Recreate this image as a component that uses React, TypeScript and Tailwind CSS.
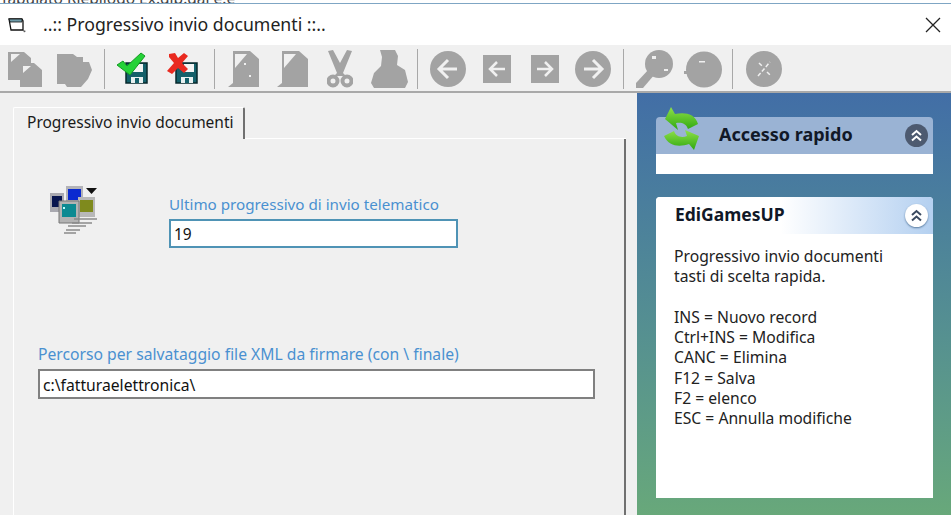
import React from 'react';

const font = 'font-["Noto_Sans","Liberation_Sans",sans-serif]';
const grey = '#a3a3a3';

function DocPair() {
  return (
    <svg width="34" height="37" viewBox="0 0 34 37" className="block">
      <path d="M0 1h16l7 6v5h3l8 7v17H12v-7H0z" fill={grey} />
      <path d="M3 3h9L3 11zM15 15h8l-8 7z" fill="#f0f0f0" />
    </svg>
  );
}

function FolderBlob() {
  return (
    <svg width="36" height="37" viewBox="0 0 36 37" className="block">
      <path d="M1 3h16l4 3h6v5h6l3 8-4 9-7 8H11l-2-3H1z" fill={grey} />
    </svg>
  );
}

function DiskCheck() {
  return (
    <svg width="33" height="38" viewBox="0 0 33 38" className="block">
      <path d="M9 13h21v20H9z" fill="#14606a" stroke="#07282c" strokeWidth="1.5" />
      <path d="M16 14h10v8H16z" fill="#f4f4f4" />
      <path d="M14 27h12v6H14z" fill="#e8f0f0" />
      <path d="M18 28h4v5h-4z" fill="#14606a" />
      <path d="M0 15l6-4 4 5L24 3l4 3-15 19z" fill="#25d238" stroke="#149a22" strokeWidth="1" />
    </svg>
  );
}

function DiskCross() {
  return (
    <svg width="33" height="38" viewBox="0 0 33 38" className="block">
      <path d="M10 13h21v20H10z" fill="#14606a" stroke="#07282c" strokeWidth="1.5" />
      <path d="M18 14h10v8H18z" fill="#f4f4f4" />
      <path d="M15 27h12v6H15z" fill="#e8f0f0" />
      <path d="M19 28h4v5h-4z" fill="#14606a" />
      <path d="M3 4l6-1 3 5 6-5 4 3-6 7 6 6-4 4-6-5-6 6-5-3 7-8-5-6z" fill="#e92a20" />
    </svg>
  );
}

function PageIcon({ nicks }: { nicks?: boolean }) {
  return (
    <svg width="32" height="36" viewBox="0 0 32 36" className="block">
      <path d="M5 0h17l9 8v28H0l5-4z" fill={grey} />
      <path d="M7 3h12L7 17z" fill="#f0f0f0" />
      {nicks && <path d="M16 12h2v2h-2zM21 24h2v2h-2z" fill="#f0f0f0" />}
    </svg>
  );
}

function Scissors() {
  return (
    <svg width="26" height="38" viewBox="0 0 26 38" className="block">
      <path d="M1 1l5-1 7 13 7-13 5 1-9 22 3 3h-12l3-3z" fill={grey} />
      <circle cx="6" cy="31" r="4.5" fill="none" stroke={grey} strokeWidth="4" />
      <circle cx="20" cy="31" r="4.5" fill="none" stroke={grey} strokeWidth="4" />
    </svg>
  );
}

function Stamp() {
  return (
    <svg width="37" height="38" viewBox="0 0 37 38" className="block">
      <path d="M9 0h15l3 6-1 9 8 5 3 12-3 6H3l-3-5 3-10 7-7 1-9z" fill={grey} />
    </svg>
  );
}

function CircleArrow({ dir }: { dir: 'left' | 'right' }) {
  return (
    <svg width="36" height="36" viewBox="0 0 36 36" className="block">
      <circle cx="18" cy="18" r="18" fill={grey} />
      <path
        d={dir === 'left' ? 'M27 18H10M18 9l-9 9 9 9' : 'M9 18h17M18 9l9 9-9 9'}
        fill="none"
        stroke="#f0f0f0"
        strokeWidth="3"
      />
    </svg>
  );
}

function SquareArrow({ dir }: { dir: 'left' | 'right' }) {
  return (
    <svg width="28" height="28" viewBox="0 0 28 28" className="block">
      <path d="M0 0h28v28H0z" fill={grey} />
      <path
        d={dir === 'left' ? 'M22 14H7M14 7l-7 7 7 7' : 'M6 14h15M14 7l7 7-7 7'}
        fill="none"
        stroke="#f0f0f0"
        strokeWidth="2.5"
      />
    </svg>
  );
}

function Magnifier() {
  return (
    <svg width="38" height="38" viewBox="0 0 38 38" className="block">
      <circle cx="24" cy="14" r="14" fill={grey} />
      <path d="M1 33l13-14 6 5-12 14H1z" fill={grey} />
      <path d="M17 6h4v3h-4zM29 19h4v2h-4z" fill="#f0f0f0" />
    </svg>
  );
}

function Blob() {
  return (
    <svg width="38" height="37" viewBox="0 0 38 37" className="block">
      <circle cx="20" cy="18.5" r="18" fill={grey} />
      <path d="M0 20h5v3H0z" fill={grey} />
      <path d="M15 10h6v1.5h-6z" fill="#f0f0f0" />
    </svg>
  );
}

function CircleCross() {
  return (
    <svg width="36" height="36" viewBox="0 0 36 36" className="block">
      <circle cx="18" cy="18" r="18" fill={grey} />
      <path d="M12 25l12-14M13 12l3 3M21 21l3 3" fill="none" stroke="#f0f0f0" strokeWidth="1.5" strokeDasharray="4 2" />
    </svg>
  );
}

function Sep({ className }: { className: string }) {
  return <div className={`w-px h-[40px] bg-[#a8a8a8] ${className}`} />;
}

function WindowGlyph() {
  return (
    <svg width="20" height="18" viewBox="0 0 20 18" className="block">
      <path d="M1 3h13l1 2v9H3z" fill="#fff" stroke="#111" strokeWidth="1.3" />
      <path d="M1 3h13v3H2z" fill="#6d9aa8" stroke="#111" strokeWidth="0.8" />
      <path d="M15 14l3 1-2 1.5z" fill="#555" />
    </svg>
  );
}

function NetworkIcon() {
  return (
    <svg width="48" height="50" viewBox="0 0 48 50" className="block">
      <path d="M0 8h14v19H0z" fill="#a9a9b0" />
      <path d="M2 11h10v11H2z" fill="#07154f" />
      <path d="M16 1h17v22H16z" fill="#b3b3b8" />
      <path d="M18 4h13v11H18z" fill="#0a2ad0" />
      <path d="M28 12h17v20H28z" fill="#b8b8b8" />
      <path d="M30 15h13v12H30z" fill="#7f8a1d" />
      <path d="M9 16h20v22H9z" fill="#b3b3b3" stroke="#777" strokeWidth="1" />
      <path d="M12 19h14v13H12z" fill="#0d8a92" />
      <path d="M13 22h2v2h-2z" fill="#bff" />
      <path d="M36 3h11l-5.5 6z" fill="#111" />
      <path d="M24 34h23M22 38h20M18 41h18M16 45h14M14 48h12" stroke="#8a8a8a" strokeWidth="1.6" />
    </svg>
  );
}

function SyncArrows() {
  return (
    <svg width="42" height="46" viewBox="0 0 42 46" className="block">
      <defs>
        <linearGradient id="syncGreen" x1="0" y1="0" x2="0" y2="1">
          <stop offset="0" stopColor="#8fe04a" />
          <stop offset="1" stopColor="#2fa80f" />
        </linearGradient>
      </defs>
      <path d="M4 12L10 0l4 7c9-2 20-1 23 10l-10 5c-2-6-7-7-12-6l2 7z" fill="url(#syncGreen)" />
      <path d="M38 29l-5 14-5-6c-9 3-20 3-25-8l10-5c2 6 8 7 13 5l-2-6z" fill="url(#syncGreen)" />
    </svg>
  );
}

function Chevrons({ dark }: { dark?: boolean }) {
  return (
    <div
      className={`w-[23px] h-[23px] rounded-full flex items-center justify-center ${
        dark ? 'bg-[#4d5a70]' : 'bg-white shadow-[0_1px_2px_#5a7ca0]'
      }`}
    >
      <svg width="13" height="13" viewBox="0 0 13 13">
        <path d="M2 6l4.5-4L11 6M2 11.5l4.5-4 4.5 4" fill="none" stroke={dark ? '#fff' : '#3b4a60'} strokeWidth="2" />
      </svg>
    </div>
  );
}

export default function App() {
  return (
    <div className={`w-[951px] h-[515px] overflow-hidden flex flex-col bg-[#f0f0f0] ${font}`}>
      <div className="h-[4px] overflow-hidden bg-white border-b border-[#7fa6c4] text-[15.5px] leading-[12px] text-[#444] whitespace-nowrap">
        <div className="-mt-[8px]">Tabulato Riepilogo Ex.dip.dal e.e</div>
      </div>

      {/* title bar */}
      <div className="h-[41px] bg-white flex items-center pl-[8px] pr-[9px] shrink-0">
        <WindowGlyph />
        <span className="ml-[15px] -mt-[1px] text-[17.7px] text-[#222]">..:: Progressivo invio documenti ::..</span>
        <svg width="18" height="18" viewBox="0 0 18 18" className="ml-auto block">
          <path d="M2 2l14 14M16 2L2 16" stroke="#222" strokeWidth="1.3" />
        </svg>
      </div>

      {/* toolbar */}
      <div className="h-[48px] shrink-0 flex items-center pl-[8px] pt-[2px] border-b-2 border-[#a9a9a9]">
        <DocPair />
        <div className="ml-[14px]"><FolderBlob /></div>
        <Sep className="ml-[12px]" />
        <div className="ml-[12px]"><DiskCheck /></div>
        <div className="ml-[16px]"><DiskCross /></div>
        <Sep className="ml-[15px]" />
        <div className="ml-[13px]"><PageIcon nicks /></div>
        <div className="ml-[17px]"><PageIcon /></div>
        <div className="ml-[18px]"><Scissors /></div>
        <div className="ml-[18px]"><Stamp /></div>
        <Sep className="ml-[9px]" />
        <div className="ml-[12px]"><CircleArrow dir="left" /></div>
        <div className="ml-[17px]"><SquareArrow dir="left" /></div>
        <div className="ml-[20px]"><SquareArrow dir="right" /></div>
        <div className="ml-[16px]"><CircleArrow dir="right" /></div>
        <Sep className="ml-[12px]" />
        <div className="ml-[11px]"><Magnifier /></div>
        <div className="ml-[11px]"><Blob /></div>
        <Sep className="ml-[10px]" />
        <div className="ml-[13px]"><CircleCross /></div>
      </div>

      <div className="flex flex-1 min-h-0">
        {/* left form */}
        <div className="w-[637px] shrink-0 pt-[14px] pl-[13px] pr-[11px] flex flex-col">
          <div className="flex h-[32px] shrink-0">
            <div className="w-[232px] border-l border-t border-white rounded-t-[2px] border-r-2 border-r-[#707070] pl-[13px] pt-[3px] text-[15.5px] text-[#1a1a1a] whitespace-nowrap">
              Progressivo invio documenti
            </div>
            <div className="flex-1 border-b border-white" />
          </div>
          <div className="flex-1 border-l border-white border-r-2 border-r-[#707070] relative">
            <div className="flex pt-[46px] pl-[36px]">
              <NetworkIcon />
              <div className="ml-[71px] mt-[9px]">
                <div className="text-[15.2px] leading-[20px] text-[#4a90d0] whitespace-nowrap">
                  Ultimo progressivo di invio telematico
                </div>
                <div className="mt-[5px] w-[289px] h-[29px] bg-white border-2 border-[#4f93b5] pl-[3px] text-[15.5px] leading-[27px] text-[#111]">
                  19
                </div>
              </div>
            </div>
            <div className="pl-[24px] mt-[96px]">
              <div className="text-[15.7px] leading-[20px] text-[#4a90d0] whitespace-nowrap">
                Percorso per salvataggio file XML da firmare (con \ finale)
              </div>
              <div className="mt-[5px] w-[557px] h-[30px] bg-white border-2 border-[#808080] pl-[3px] text-[15.7px] leading-[28px] text-[#111]">
                c:\fatturaelettronica\
              </div>
            </div>
          </div>
        </div>

        {/* side panels */}
        <div className="flex-1 bg-gradient-to-b from-[#426ea6] to-[#68a87a] pt-[24px] pl-[19px] pr-[18px] pb-[17px] flex flex-col">
          <div className="relative shrink-0">
            <div className="h-[37px] rounded-t-[4px] bg-[#9ab3d4] flex items-center pl-[63px] pr-[5px]">
              <span className="font-bold text-[18px] -mt-[2px] text-[#111827]">Accesso rapido</span>
              <div className="ml-auto"><Chevrons dark /></div>
            </div>
            <div className="h-[20px] bg-white" />
            <div className="absolute -top-[10px] left-[5px]"><SyncArrows /></div>
          </div>

          <div className="mt-[23px] flex-1 bg-white flex flex-col rounded-t-[4px]">
            <div className="h-[37px] shrink-0 rounded-t-[4px] bg-gradient-to-r from-white from-[45%] to-[#b4d0f0] flex items-center pl-[19px] pr-[5px]">
              <span className="font-bold text-[17.5px] -mt-[2px] text-[#111827]">EdiGamesUP</span>
              <div className="ml-auto"><Chevrons /></div>
            </div>
            <div className="pl-[18px] pt-[12px] text-[15.7px] leading-[20.3px] text-[#222] whitespace-nowrap">
              <div>Progressivo invio documenti</div>
              <div>tasti di scelta rapida.</div>
              <div className="mt-[20.3px]">INS = Nuovo record</div>
              <div>Ctrl+INS = Modifica</div>
              <div>CANC = Elimina</div>
              <div>F12 = Salva</div>
              <div>F2 = elenco</div>
              <div>ESC = Annulla modifiche</div>
            </div>
          </div>
        </div>
      </div>
    </div>
  );
}
